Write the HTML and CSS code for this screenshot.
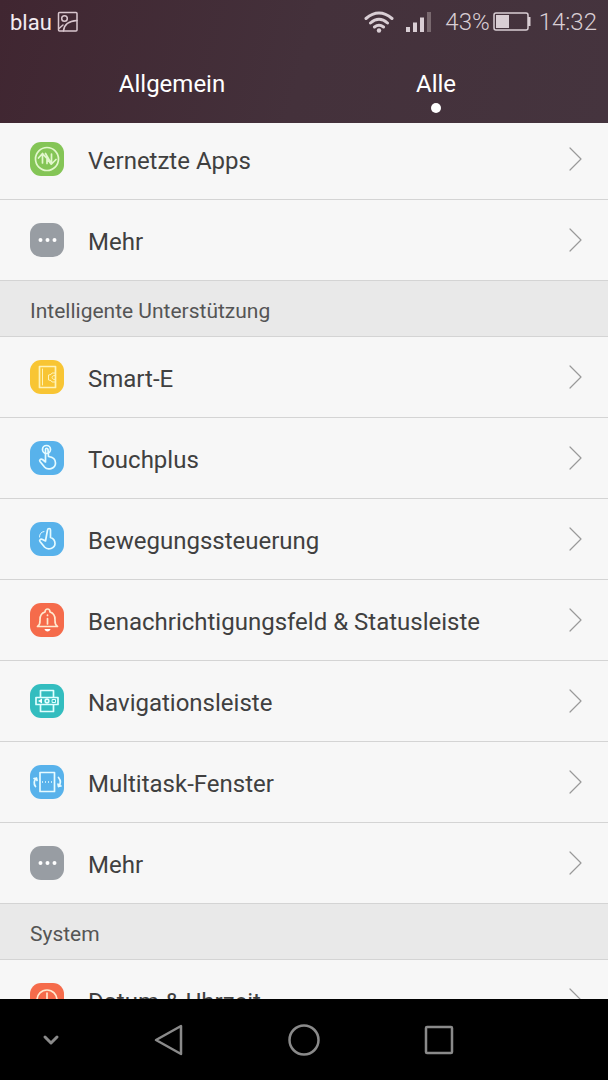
FILE: index.html
```
<!DOCTYPE html>
<html lang="de">

<head>
    <meta charset="UTF-8">
    <meta name="viewport" content="width=device-width, initial-scale=1.0">
    <title>Einstellungen</title>
    <link rel="stylesheet" href="styles.css">
</head>

<body>
    <header class="top">
        <div class="status">
            <span class="carrier">blau</span>
            <svg class="shot" width="22" height="22" viewBox="0 0 22 22">
                <rect x="1.500" y="1.500" width="18.500" height="18.500" rx="1" />
                <circle cx="7.500" cy="7.500" r="2.800" />
                <path d="M6.500 20C7 13.500 12 10 20 9.500M2 17.500L6 14" />
            </svg>
            <svg class="wifi" width="30" height="22" viewBox="0 0 30 22">
                <path d="M2 7.500Q15-3.500 28 7.500M6.500 12Q15 4.500 23.500 12M10.500 16Q15 12.500 19.500 16" />
                <circle cx="15" cy="19.500" r="2.200" />
            </svg>
            <svg class="signal" width="26" height="22" viewBox="0 0 26 22">
                <path d="M0 16h4v5H0zM7 11.500h4V21H7zM14 6.500h4V21h-4z" />
                <path class="weak" d="M21 1h4v20h-4z" />
            </svg>
            <span class="percent">43%</span>
            <svg class="battery" width="38" height="20" viewBox="0 0 38 20">
                <rect class="case" x="1" y="1" width="34" height="17" rx="2" />
                <path d="M3 3h13v13H3zM35 5h2.500v9H35z" />
            </svg>
            <span class="clock">14:32</span>
        </div>
        <nav class="tabs">
            <a href="#allgemein">Allgemein</a>
            <a href="#alle" class="active">Alle</a>
        </nav>
    </header>

    <main class="content">
        <div class="list">
            <a class="row" href="#apps">
                <svg class="icon green" viewBox="0 0 34 34">
                    <circle cx="17" cy="17" r="11.500" />
                    <path d="M8.500 16l4-4.500 3.500 4M12.500 12v9M15.500 11.500l6 10.500 4.500-4.500M21.500 21v-9M17 15v6.500M18 18l3 4" />
                </svg>
                <span class="label">Vernetzte Apps</span>
                <svg class="arrow" viewBox="0 0 14 24"><path d="M1 1l11 11L1 23" /></svg>
            </a>
            <a class="row" href="#mehr">
                <svg class="icon grey" viewBox="0 0 34 34">
                    <path class="dots" d="M10.500 17h0M17.500 17h0M24.500 17h0" />
                </svg>
                <span class="label">Mehr</span>
                <svg class="arrow" viewBox="0 0 14 24"><path d="M1 1l11 11L1 23" /></svg>
            </a>

            <h2 class="section">Intelligente Unterstützung</h2>
            <a class="row" href="#smart">
                <svg class="icon yellow" viewBox="0 0 34 34">
                    <path d="M9.500 6.500h16v21h-16z" />
                    <path class="thin" d="M12.500 9v16M25 13h-3l-1 1.500-2.500.5v5l2.500.5 1 1.500h3M25 15.500c-4-.5-4 4.500 0 4" />
                </svg>
                <span class="label">Smart-E</span>
                <svg class="arrow" viewBox="0 0 14 24"><path d="M1 1l11 11L1 23" /></svg>
            </a>
            <a class="row" href="#touchplus">
                <svg class="icon blue" viewBox="0 0 34 34">
                    <circle cx="16.500" cy="8.500" r="4" />
                    <path d="M15.500 8.500v12.500l-3-2.500c-2-1-3.500.500-2.500 2l4.500 5.500c3 3.500 11 2 11-4 0-4-3-6-7-6.500l-.5-7c-.3-1.700-2.500-1.700-2.500 0z" />
                </svg>
                <span class="label">Touchplus</span>
                <svg class="arrow" viewBox="0 0 14 24"><path d="M1 1l11 11L1 23" /></svg>
            </a>
            <a class="row" href="#bewegung">
                <svg class="icon blue" viewBox="0 0 34 34">
                    <path d="M17.500 8l-2 11-3-1.500c-2-1-3.500.500-2.500 2l4.500 5.500c3.500 3.500 10.500 1.500 10.500-3.500 0-3.500-1.500-5-4.500-6V8c0-2-2.700-2-3 0z" />
                    <path class="thin" d="M9.500 15c0-3 1.500-5 4.500-5.500" />
                </svg>
                <span class="label">Bewegungssteuerung</span>
                <svg class="arrow" viewBox="0 0 14 24"><path d="M1 1l11 11L1 23" /></svg>
            </a>
            <a class="row" href="#benachrichtigung">
                <svg class="icon red" viewBox="0 0 34 34">
                    <path d="M7.500 23.500c3-2 2.500-4 2.500-7 0-4 1.500-6.500 5-7.500 0-4 5-4 5 0 3.500 1 5 3.500 5 7.500 0 3-.5 5 2.500 7z" />
                    <path d="M17.500 15.500v5.500M17.500 12v.5" />
                    <path class="fill" d="M14.500 26h6c-.5 3.300-5.500 3.300-6 0z" />
                </svg>
                <span class="label">Benachrichtigungsfeld &amp; Statusleiste</span>
                <svg class="arrow" viewBox="0 0 14 24"><path d="M1 1l11 11L1 23" /></svg>
            </a>
            <a class="row" href="#navigation">
                <svg class="icon teal" viewBox="0 0 34 34">
                    <path d="M10.500 13.500v-7h13v7M10.500 20.500v7h13v-7M6 13.500h22v7H6z" />
                    <circle cx="17" cy="17" r="1.800" />
                    <path class="thin" d="M22.500 15.500h3v3h-3z" />
                    <path class="fill" d="M8 17l4-2.500v5z" />
                </svg>
                <span class="label">Navigationsleiste</span>
                <svg class="arrow" viewBox="0 0 14 24"><path d="M1 1l11 11L1 23" /></svg>
            </a>
            <a class="row" href="#multitask">
                <svg class="icon blue" viewBox="0 0 34 34">
                    <path d="M10 7.500h14.500v19H10z" />
                    <path class="dashed" d="M12 17h11" />
                    <path d="M5.500 21.500c-2-3-1.500-6 1-8.500M4 13.500l2.500-.5.500 2.500M28.500 12.500c2.500 3 2.500 6 0 9M31 21l-2.500.5-.5-2.500" />
                </svg>
                <span class="label">Multitask-Fenster</span>
                <svg class="arrow" viewBox="0 0 14 24"><path d="M1 1l11 11L1 23" /></svg>
            </a>
            <a class="row" href="#mehr2">
                <svg class="icon grey" viewBox="0 0 34 34">
                    <path class="dots" d="M10.500 17h0M17.500 17h0M24.500 17h0" />
                </svg>
                <span class="label">Mehr</span>
                <svg class="arrow" viewBox="0 0 14 24"><path d="M1 1l11 11L1 23" /></svg>
            </a>

            <h2 class="section">System</h2>
            <a class="row" href="#datum">
                <svg class="icon red" viewBox="0 0 34 34">
                    <circle cx="17" cy="17" r="10" />
                    <path d="M17 10v8l5 3" />
                </svg>
                <span class="label">Datum &amp; Uhrzeit</span>
                <svg class="arrow" viewBox="0 0 14 24"><path d="M1 1l11 11L1 23" /></svg>
            </a>
        </div>
    </main>

    <footer class="keys">
        <button aria-label="Leiste ausblenden">
            <svg width="18" height="12" viewBox="0 0 18 12"><path class="bold" d="M3 3l6 6 6-6" /></svg>
        </button>
        <button aria-label="Zurück">
            <svg width="30" height="32" viewBox="0 0 30 32"><path d="M27 2v28L2 16z" /></svg>
        </button>
        <button aria-label="Startseite">
            <svg width="34" height="34" viewBox="0 0 34 34"><circle cx="17" cy="17" r="14.500" /></svg>
        </button>
        <button aria-label="Übersicht">
            <svg width="30" height="30" viewBox="0 0 30 30"><rect x="2" y="2" width="26" height="26" rx="1" /></svg>
        </button>
    </footer>
</body>

</html>
```
FILE: styles.css
```
* {
    box-sizing: border-box;
}

body {
    display: flex;
    flex-direction: column;
    height: 100vh;
    margin: 0;
    background-color: #000;
    font-family: Roboto, 'Noto Sans', sans-serif;
}

a {
    color: inherit;
    text-decoration: none;
}

svg {
    flex: none;
    fill: none;
    stroke-linecap: round;
    stroke-linejoin: round;
}

.top {
    flex: none;
    background: linear-gradient(105deg, #402631, #44313b 50%, #45343e);
    color: #fff;
}

.status {
    display: flex;
    align-items: center;
    height: 44px;
    padding: 0 11px 0 10px;
    font-size: 24px;
    font-weight: 300;
    color: #d9ced4;
}

.carrier {
    margin-right: 5px;
    font-size: 22px;
    font-weight: 400;
    color: #f3ecf0;
}

.shot {
    stroke: #d9c6ce;
    stroke-width: 1.5;
}

.wifi {
    margin-left: auto;
    stroke: #d9ced4;
    stroke-width: 3;
}

.wifi circle {
    fill: #d9ced4;
    stroke: none;
}

.signal {
    margin: 0 13px 0 12px;
    fill: #d9ced4;
}

.signal .weak {
    fill: #79696f;
}

.battery {
    margin: 0 8px 0 3px;
    fill: #d9ced4;
}

.battery .case {
    fill: none;
    stroke: #d9ced4;
    stroke-width: 1.5;
}

.tabs {
    display: grid;
    grid-template-columns: 1fr 1fr;
    height: 79px;
    padding: 24px 40px 0;
    font-size: 24px;
    line-height: 32px;
    text-align: center;
}

.active::after {
    content: "";
    display: block;
    width: 10px;
    height: 10px;
    margin: 3px auto 0;
    border-radius: 50%;
    background-color: #fff;
}

.content {
    flex: 1;
    min-height: 0;
    overflow: hidden;
    background-color: #f7f7f7;
}

/* list is scrolled a little under the header */
.list {
    margin-top: -4px;
}

.row {
    display: flex;
    align-items: center;
    height: 81px;
    padding: 0 25px 0 30px;
    border-bottom: 1px solid #d4d4d4;
    color: #404040;
}

.label {
    flex: 1;
    padding-top: 3px;
    font-size: 24px;
    line-height: 32px;
}

.section {
    height: 56px;
    margin: 0;
    padding: 3px 30px 0;
    border-bottom: 1px solid #d4d4d4;
    background-color: #e9e9e9;
    color: #555;
    font-size: 21px;
    font-weight: 400;
    line-height: 54px;
}

.icon {
    width: 34px;
    height: 34px;
    margin-right: 24px;
    border-radius: 11px;
    stroke: #fff;
    stroke-width: 1.7;
}

.icon .thin {
    stroke-width: 1;
}

.icon .fill {
    fill: #fff;
    stroke: none;
}

.icon .dots {
    stroke-width: 4;
}

.icon .dashed {
    stroke-dasharray: 1 2;
    stroke-linecap: butt;
}

.green {
    background-color: #84c556;
    stroke: #e2f7cc;
}

.grey {
    background-color: #989da3;
}

.yellow {
    background-color: #f8c534;
    stroke: #fff3b8;
}

.blue {
    background-color: #58b2eb;
    stroke: #e6fbff;
}

.red {
    background-color: #f56b4b;
    stroke: #ffe9cf;
}

.teal {
    background-color: #33bdbf;
    stroke: #e0ffff;
}

.arrow {
    width: 14px;
    height: 24px;
    stroke: #999;
    stroke-width: 1.2;
}

.keys {
    display: grid;
    flex: none;
    grid-template-columns: 3fr 4fr 4fr 4fr 3fr;
    height: 81px;
    background-color: #000;
}

.keys button {
    display: flex;
    align-items: center;
    justify-content: center;
    padding: 0;
    border: 0;
    background: none;
}

.keys svg {
    stroke: #8a8a8a;
    stroke-width: 2.5;
}

.keys .bold {
    stroke-width: 3;
}
```
